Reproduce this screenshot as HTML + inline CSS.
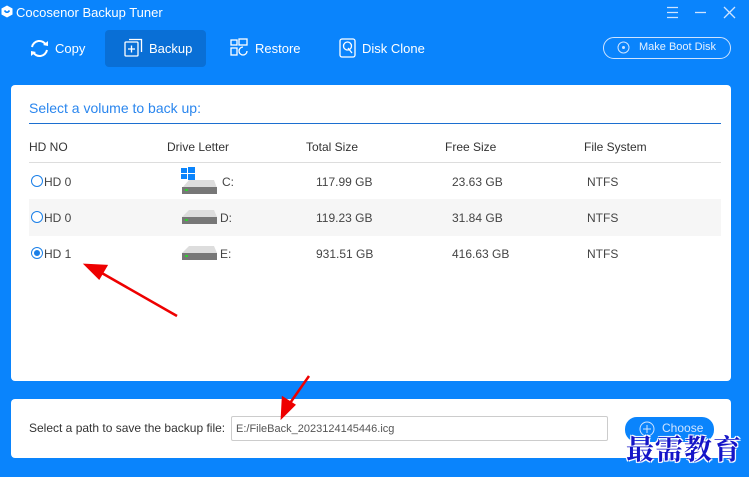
<!DOCTYPE html>
<html><head><meta charset="utf-8"><style>
*{margin:0;padding:0;box-sizing:border-box}
body{width:749px;height:477px;background:#0a84fc;font-family:"Liberation Sans",Arial,sans-serif;position:relative;overflow:hidden;color:#333}
.a{position:absolute}
.t{color:#fff;font-size:13px}
.nav{color:#fff;font-size:13px;top:41px}
.panel{background:#fff;border-radius:4px}
.h{font-size:12px;color:#333;top:140px}
.c{font-size:12px;color:#444}
.radio{width:12px;height:12px;border:1px solid #1a7fe8;border-radius:50%;background:#fff}
</style></head><body>
<svg class="a" style="left:1px;top:5px" width="12" height="13" viewBox="0 0 12 13"><path d="M6 0.5L11.5 3.5V9.5L6 12.5L0.5 9.5V3.5Z" fill="#fff"/><path d="M3.5 5.5Q6 9 8.5 5.5" stroke="#0a84fc" stroke-width="1.6" fill="none"/></svg>
<div class="a t" style="left:16px;top:5px">Cocosenor Backup Tuner</div>
<svg class="a" style="left:665px;top:6px" width="75" height="13"><g stroke="#cfe4ff" stroke-width="1.3" fill="none"><path d="M2 1.5H13M2 6.5H13M2 11.5H13"/><path d="M30 6.5H41"/><path d="M59 1L70 12M70 1L59 12"/></g></svg>
<div class="a" style="left:105px;top:30px;width:101px;height:37px;background:#096fd6;border-radius:4px"></div>
<svg class="a" style="left:29px;top:39px" width="21" height="19" viewBox="0 0 21 19"><g stroke="#fff" stroke-width="2" fill="none"><path d="M3 8A7.5 7.5 0 0 1 17 6"/><path d="M18 11A7.5 7.5 0 0 1 4 13"/></g><path d="M14 6L19 7L19 2Z" fill="#fff"/><path d="M7 13L2 12L2 17Z" fill="#fff"/></svg>
<div class="a nav" style="left:55px">Copy</div>
<svg class="a" style="left:124px;top:38px" width="19" height="19"><g stroke="#fff" stroke-width="1.3" fill="none"><rect x="1" y="4" width="13" height="14" rx="1"/><path d="M5 1.5H17.5V14"/><path d="M7.5 7.5V14.5M4 11H11"/></g></svg>
<div class="a nav" style="left:149px">Backup</div>
<svg class="a" style="left:230px;top:38px" width="20" height="20"><g stroke="#fff" stroke-width="1.3" fill="none"><rect x="1" y="2" width="6" height="5"/><rect x="9" y="1" width="8" height="6"/><rect x="1" y="10" width="6" height="7"/><path d="M17 13A4 4 0 1 1 13 9"/></g></svg>
<div class="a nav" style="left:255px">Restore</div>
<svg class="a" style="left:339px;top:38px" width="18" height="20"><g stroke="#fff" stroke-width="1.3" fill="none"><rect x="1" y="1" width="15" height="18" rx="2"/><circle cx="8.5" cy="8" r="4"/><path d="M9 10L13 15"/></g></svg>
<div class="a nav" style="left:362px">Disk Clone</div>
<div class="a" style="left:603px;top:37px;width:128px;height:22px;border:1px solid #cfe4ff;border-radius:11px"></div>
<svg class="a" style="left:617px;top:41px" width="13" height="13"><circle cx="6.5" cy="6.5" r="5.5" stroke="#cfe4ff" fill="none"/><circle cx="6.5" cy="6.5" r="1.5" fill="#cfe4ff"/></svg>
<div class="a" style="left:639px;top:41px;color:#e6f1ff;font-size:11px">Make Boot Disk</div>

<div class="a panel" style="left:11px;top:85px;width:720px;height:296px"></div>
<div class="a" style="left:29px;top:100px;color:#2a86ee;font-size:14px">Select a volume to back up:</div>
<div class="a" style="left:29px;top:123px;width:692px;height:1px;background:#1c6fd0"></div>
<div class="a h" style="left:29px">HD NO</div>
<div class="a h" style="left:167px">Drive Letter</div>
<div class="a h" style="left:306px">Total Size</div>
<div class="a h" style="left:445px">Free Size</div>
<div class="a h" style="left:584px">File System</div>
<div class="a" style="left:29px;top:162px;width:692px;height:1px;background:#ddd"></div>
<div class="a" style="left:29px;top:199px;width:692px;height:37px;background:#f6f6f6"></div>

<div class="a radio" style="left:31px;top:175px"></div>
<div class="a c" style="left:44px;top:175px">HD 0</div>
<div class="a radio" style="left:31px;top:211px"></div>
<div class="a c" style="left:44px;top:211px">HD 0</div>
<div class="a radio" style="left:31px;top:247px;border-color:#1a7fe8"><div style="width:6px;height:6px;margin:2px;border-radius:50%;background:#1a7fe8"></div></div>
<div class="a c" style="left:44px;top:247px">HD 1</div>

<svg class="a" style="left:180px;top:167px" width="40" height="28"><rect x="1" y="1" width="6" height="5" fill="#0a84fc"/><rect x="8" y="0" width="7" height="6" fill="#0a84fc"/><rect x="1" y="7" width="6" height="5" fill="#0a84fc"/><rect x="8" y="7" width="7" height="6" fill="#0a84fc"/><path d="M2 21L9 13H34L37 21Z" fill="#ddd"/><rect x="2" y="20" width="35" height="7" fill="#777"/><rect x="5" y="22" width="3" height="2" fill="#3c3"/></svg>
<div class="a c" style="left:222px;top:175px">C:</div>
<svg class="a" style="left:180px;top:209px" width="40" height="16"><path d="M2 8L9 1H34L37 8Z" fill="#ddd"/><rect x="2" y="8" width="35" height="7" fill="#777"/><rect x="5" y="10" width="3" height="2" fill="#3c3"/></svg>
<div class="a c" style="left:220px;top:211px">D:</div>
<svg class="a" style="left:180px;top:245px" width="40" height="16"><path d="M2 8L9 1H34L37 8Z" fill="#ddd"/><rect x="2" y="8" width="35" height="7" fill="#777"/><rect x="5" y="10" width="3" height="2" fill="#3c3"/></svg>
<div class="a c" style="left:220px;top:247px">E:</div>

<div class="a c" style="left:316px;top:175px">117.99 GB</div>
<div class="a c" style="left:452px;top:175px">23.63 GB</div>
<div class="a c" style="left:587px;top:175px">NTFS</div>
<div class="a c" style="left:316px;top:211px">119.23 GB</div>
<div class="a c" style="left:452px;top:211px">31.84 GB</div>
<div class="a c" style="left:587px;top:211px">NTFS</div>
<div class="a c" style="left:316px;top:247px">931.51 GB</div>
<div class="a c" style="left:452px;top:247px">416.63 GB</div>
<div class="a c" style="left:587px;top:247px">NTFS</div>

<div class="a panel" style="left:11px;top:399px;width:720px;height:59px"></div>
<div class="a" style="left:29px;top:421px;font-size:12px;color:#333">Select a path to save the backup file:</div>
<div class="a" style="left:231px;top:416px;width:377px;height:25px;border:1px solid #ccc;border-radius:2px;font-size:11px;color:#555;padding:6px 4px">E:/FileBack_2023124145446.icg</div>
<div class="a" style="left:625px;top:417px;width:89px;height:25px;background:#0a84fc;border-radius:12px"></div>
<svg class="a" style="left:639px;top:421px" width="16" height="16"><circle cx="8" cy="8" r="7" stroke="#cfe4ff" fill="none"/><path d="M8 4V12M4 8H12" stroke="#cfe4ff"/></svg>
<div class="a" style="left:662px;top:421px;color:#cfe4ff;font-size:12px">Choose</div>

<svg class="a" style="left:0;top:0" width="749" height="477"><g fill="#e00" stroke="#e00" stroke-width="2.5"><path d="M177 316L100 272" fill="none"/><path d="M86 265L106 266L99 278Z"/><path d="M309 376L288 406" fill="none"/><path d="M282 417L283 398L294 405Z"/></g></svg>
<div class="a" style="left:626px;top:428px;font-family:'Noto Serif CJK SC',serif;font-weight:bold;font-size:28px;color:#1515c8;letter-spacing:1px;text-shadow:0 0 2px #fff,1px 1px 0 #fff,-1px -1px 0 #fff,1px -1px 0 #fff,-1px 1px 0 #fff">最需教育</div>
</body></html>
